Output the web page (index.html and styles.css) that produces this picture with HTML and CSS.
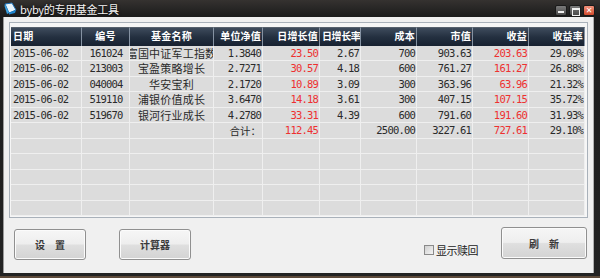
FILE: index.html
```html
<!DOCTYPE html>
<html>
<head>
	<meta charset="utf-8">
	<title>byby的专用基金工具</title>
	<link rel="stylesheet" href="styles.css">
</head>
<body>

	<div class="window">
		<div class="titlebar">
			<svg class="app-icon" width="13" height="13" viewBox="0 0 13 13">
				<path d="M1 2 L8 1 L12 8 L5 11 Z" fill="#e8f4fb" stroke="#1d6fb3" stroke-width="1"/>
				<path d="M5 11 L12 8 L11 11 L5 12.5 Z" fill="#1e86d0"/>
				<path d="M1 2 L5 11 L3 12 L0.5 4 Z" fill="#3aa0e0"/>
			</svg>
			<span class="title">byby的专用基金工具</span>
			<div class="caption">
				<span class="cap cap-min"></span>
				<span class="cap cap-max"></span>
				<span class="cap cap-close">✕</span>
			</div>
		</div>

		<div class="client">
			<div class="grid-box">
				<div class="grid">
					<div class="hd l">日期</div>
					<div class="hd m">编号</div>
					<div class="hd m">基金名称</div>
					<div class="hd r">单位净值</div>
					<div class="hd r">日增长值</div>
					<div class="hd l narrow">日增长率</div>
					<div class="hd r">成本</div>
					<div class="hd r">市值</div>
					<div class="hd r">收益</div>
					<div class="hd r">收益率</div>

					<div class="c l">2015-06-02</div>
					<div class="c m">161024</div>
					<div class="c name"><span>富国中证军工指数</span></div>
					<div class="c r">1.3840</div>
					<div class="c r red">23.50</div>
					<div class="c r">2.67</div>
					<div class="c r">700</div>
					<div class="c r">903.63</div>
					<div class="c r red">203.63</div>
					<div class="c r">29.09%</div>

					<div class="c l">2015-06-02</div>
					<div class="c m">213003</div>
					<div class="c name"><span>宝盈策略增长</span></div>
					<div class="c r">2.7271</div>
					<div class="c r red">30.57</div>
					<div class="c r">4.18</div>
					<div class="c r">600</div>
					<div class="c r">761.27</div>
					<div class="c r red">161.27</div>
					<div class="c r">26.88%</div>

					<div class="c l">2015-06-02</div>
					<div class="c m">040004</div>
					<div class="c name"><span>华安宝利</span></div>
					<div class="c r">2.1720</div>
					<div class="c r red">10.89</div>
					<div class="c r">3.09</div>
					<div class="c r">300</div>
					<div class="c r">363.96</div>
					<div class="c r red">63.96</div>
					<div class="c r">21.32%</div>

					<div class="c l">2015-06-02</div>
					<div class="c m">519110</div>
					<div class="c name"><span>浦银价值成长</span></div>
					<div class="c r">3.6470</div>
					<div class="c r red">14.18</div>
					<div class="c r">3.61</div>
					<div class="c r">300</div>
					<div class="c r">407.15</div>
					<div class="c r red">107.15</div>
					<div class="c r">35.72%</div>

					<div class="c l">2015-06-02</div>
					<div class="c m">519670</div>
					<div class="c name"><span>银河行业成长</span></div>
					<div class="c r">4.2780</div>
					<div class="c r red">33.31</div>
					<div class="c r">4.39</div>
					<div class="c r">600</div>
					<div class="c r">791.60</div>
					<div class="c r red">191.60</div>
					<div class="c r">31.93%</div>

					<div class="c"></div>
					<div class="c"></div>
					<div class="c"></div>
					<div class="c r cn">合计：</div>
					<div class="c r red">112.45</div>
					<div class="c"></div>
					<div class="c r">2500.00</div>
					<div class="c r">3227.61</div>
					<div class="c r red">727.61</div>
					<div class="c r">29.10%</div>

					<div class="c"></div><div class="c"></div><div class="c"></div><div class="c"></div><div class="c"></div>
					<div class="c"></div><div class="c"></div><div class="c"></div><div class="c"></div><div class="c"></div>
					<div class="c"></div><div class="c"></div><div class="c"></div><div class="c"></div><div class="c"></div>
					<div class="c"></div><div class="c"></div><div class="c"></div><div class="c"></div><div class="c"></div>
					<div class="c"></div><div class="c"></div><div class="c"></div><div class="c"></div><div class="c"></div>
					<div class="c"></div><div class="c"></div><div class="c"></div><div class="c"></div><div class="c"></div>
					<div class="c"></div><div class="c"></div><div class="c"></div><div class="c"></div><div class="c"></div>
					<div class="c"></div><div class="c"></div><div class="c"></div><div class="c"></div><div class="c"></div>
					<div class="c"></div><div class="c"></div><div class="c"></div><div class="c"></div><div class="c"></div>
					<div class="c"></div><div class="c"></div><div class="c"></div><div class="c"></div><div class="c"></div>
				</div>
			</div>

			<div class="toolbar">
				<button class="btn btn-set">设　置</button>
				<button class="btn btn-calc">计算器</button>
				<label class="check"><span class="box"></span>显示赎回</label>
				<button class="btn btn-refresh">刷　新</button>
			</div>
		</div>
	</div>

</body>
</html>
```

FILE: styles.css
```css
*{
	margin: 0;
	padding: 0;
	box-sizing: border-box;
}
body{
	width: 600px;
	height: 278px;
	overflow: hidden;
	background: #5d4a3a;
	font-family: "Noto Sans CJK SC", sans-serif;
}
.window{
	height: 276px;
	display: flex;
	flex-direction: column;
	padding: 0 6px 3px 3px;
	background: linear-gradient(#353230, #1c1c1c 16px, #232323);
}
.titlebar{
	height: 17px;
	display: flex;
	align-items: center;
}
.app-icon{
	margin: 0 3px 0 1px;
}
.title{
	color: #f4f4f4;
	font-size: 11px;
	letter-spacing: -0.3px;
	text-shadow: 0 0 3px #000;
}
.caption{
	margin-left: auto;
	display: flex;
	gap: 2px;
	margin-right: -1px;
	padding-top: 3px;
}
.cap{
	width: 12px;
	height: 11px;
	border: 1px solid #1a1a1a;
	border-radius: 2px;
	background: linear-gradient(#7a7a7a, #4a4a4a);
	position: relative;
}
.cap-min::after{
	content: "";
	position: absolute;
	left: 2px;
	bottom: 2px;
	width: 6px;
	height: 2px;
	background: #f0f0f0;
}
.cap-max::after{
	content: "";
	position: absolute;
	left: 2px;
	top: 2px;
	width: 6px;
	height: 5px;
	border: 1px solid #f0f0f0;
	border-top-width: 2px;
}
.cap-close{
	background: linear-gradient(#f0907a, #d24a2c);
	color: #fff;
	font-size: 8px;
	font-weight: bold;
	line-height: 9px;
	text-align: center;
	font-family: "DejaVu Sans", sans-serif;
}
.client{
	flex: 1;
	background: #f0f0f0;
	border-left: 1px solid #9a9a9a;
	border-right: 1px solid #b0b0b0;
}
.grid-box{
	margin: 5px 0 0 5px;
	width: 579px;
	border: 1px solid #a9b1ba;
	background: #f6f6f6;
	padding: 4px 2px 1px 1px;
}
.grid{
	display: grid;
	grid-template-columns: 71px 48px 84px 49px 57px 41px 56px 56px 56px 56px;
	grid-template-rows: 18.5px repeat(11, 15.5px);
	background: #dcdcdc;
}
.hd{
	display: flex;
	align-items: center;
	padding: 0 3px 2px;
	color: #fff;
	font-size: 10px;
	font-weight: bold;
	letter-spacing: 0.2px;
	background: linear-gradient(#3e4b5c, #243040 50%, #172130);
	border-right: 1px solid #8592a2;
	border-top: 1px solid #56606c;
	white-space: nowrap;
	overflow: hidden;
}
.hd:last-child{
	border-right: none;
}
.hd.narrow{
	padding: 0 0 2px 1px;
	letter-spacing: -0.4px;
}
.c{
	display: flex;
	align-items: center;
	padding: 0 1px 0 2px;
	color: #2a2a2a;
	font-family: "DejaVu Sans Mono", "Noto Sans CJK SC", monospace;
	font-size: 10.5px;
	letter-spacing: -0.8px;
	border-right: 1px solid #efefef;
	border-bottom: 1px solid #efefef;
	white-space: nowrap;
	overflow: hidden;
}
.l{
	justify-content: flex-start;
}
.m{
	justify-content: center;
}
.r{
	justify-content: flex-end;
}
.hd.l{
	padding-left: 2px;
}
.hd.r{
	padding-right: 1px;
}
.red{
	color: #ee3030;
}
.name{
	justify-content: center;
	padding: 0;
	font-family: "Noto Sans CJK SC", sans-serif;
	font-size: 11px;
	letter-spacing: 0.2px;
}
.name span{
	flex-shrink: 0;
}
.cn{
	font-family: "Noto Sans CJK SC", sans-serif;
	letter-spacing: 0;
}
.toolbar{
	display: flex;
	align-items: flex-start;
	padding: 9px 6px 0 10px;
}
.btn{
	font-family: "Noto Sans CJK SC", sans-serif;
	font-size: 10px;
	font-weight: bold;
	color: #3a3a3a;
	border: 1px solid #909090;
	border-radius: 3px;
	background: linear-gradient(#f6f6f6, #eeeeee 48%, #dfdfdf 52%, #d3d3d3);
	box-shadow: inset 0 0 0 1px #fbfbfb;
}
.btn-set,
.btn-calc{
	width: 72px;
	height: 31px;
	margin-top: 2px;
}
.btn-calc{
	margin-left: 33px;
}
.btn-refresh{
	width: 86px;
	height: 32px;
}
.check{
	margin-left: auto;
	margin-right: 23px;
	margin-top: 15px;
	display: flex;
	align-items: center;
	gap: 2px;
	font-size: 11px;
	color: #222;
	letter-spacing: -0.5px;
}
.check .box{
	width: 10px;
	height: 10px;
	border: 1px solid #8a8a8a;
	background: linear-gradient(135deg, #d0d0d0, #f4f4f4);
}
```
